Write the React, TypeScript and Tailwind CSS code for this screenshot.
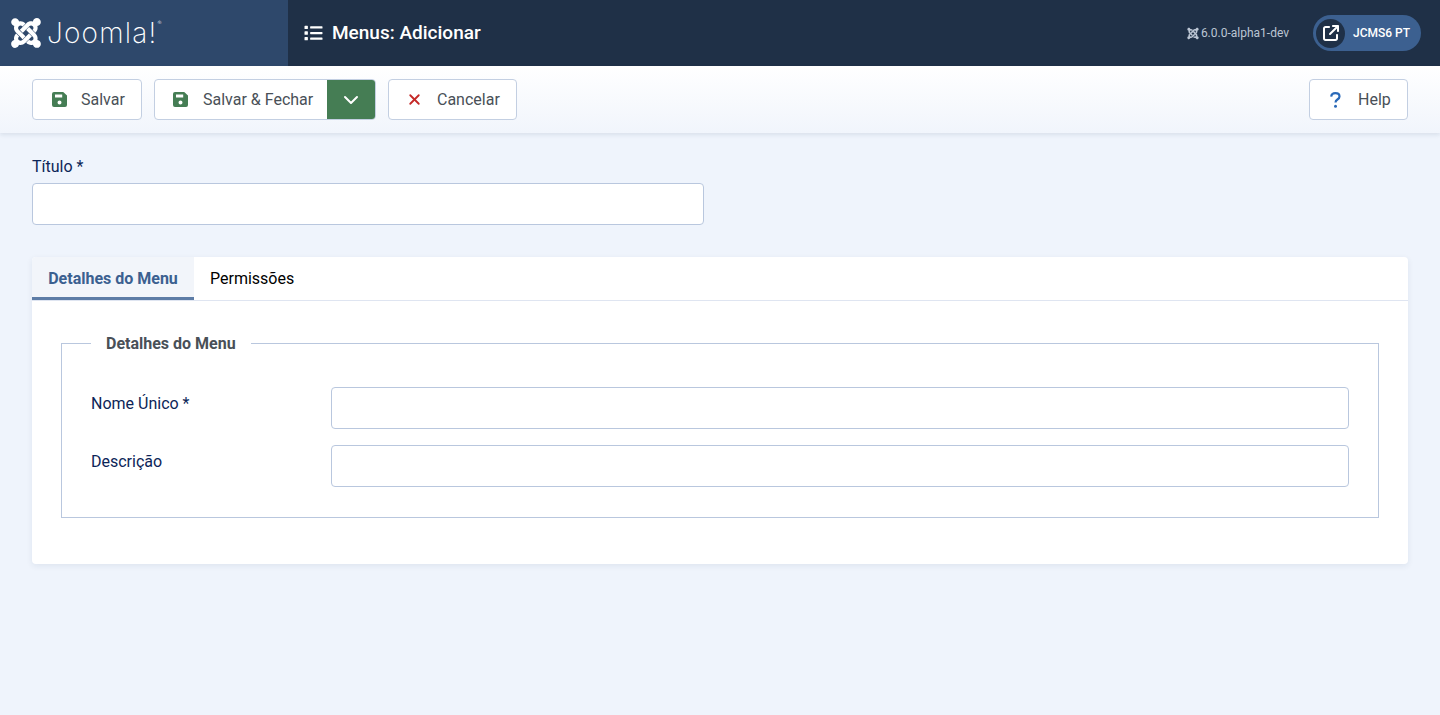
import { ReactNode } from "react";
import { ChevronDown, X } from "lucide-react";
import { FaJoomla, FaList } from "react-icons/fa";
import { FaArrowUpRightFromSquare } from "react-icons/fa6";

function SaveIcon({ className = "" }: { className?: string }) {
  return (
    <svg viewBox="0 0 15 15" className={`h-[15px] w-[15px] text-[#457d54] ${className}`}>
      <path
        fill="currentColor"
        fillRule="evenodd"
        d="M2 0h9.2L15 3.6V13a2 2 0 0 1-2 2H2a2 2 0 0 1-2-2V2a2 2 0 0 1 2-2ZM3 2.4v3.2h7.2V2.4H3Zm4.5 6a2 2 0 1 0 0 4 2 2 0 0 0 0-4Z"
      />
    </svg>
  );
}

function QuestionIcon({ className = "" }: { className?: string }) {
  return (
    <svg viewBox="0 0 11 16" fill="none" className={`h-4 w-[11px] text-[#2a69b8] ${className}`}>
      <path
        d="M1.2 4.6C1.400 2.300 3 1.100 5.400 1.100c2.400 0 4.100 1.300 4.100 3.300 0 1.500-.9 2.300-2.100 3.100C6.200 8.300 5.500 9 5.500 10.600"
        stroke="currentColor"
        strokeWidth="2.2"
      />
      <circle cx="5.500" cy="14.200" r="1.500" fill="currentColor" />
    </svg>
  );
}

function ToolbarButton({
  icon,
  label,
  className = "",
}: {
  icon: ReactNode;
  label: string;
  className?: string;
}) {
  return (
    <button
      className={`flex h-[41px] items-center rounded-[4px] border border-[#c3cfe2] bg-white text-base text-[#495057] ${className}`}
    >
      {icon}
      <span>{label}</span>
    </button>
  );
}

function TextInput({ className = "" }: { className?: string }) {
  return (
    <input
      type="text"
      className={`block h-[42px] rounded-[4px] border border-[#b9c7de] bg-white ${className}`}
    />
  );
}

function FormRow({ label, className = "" }: { label: string; className?: string }) {
  return (
    <div className={`flex ${className}`}>
      <label className="w-[240px] pt-[5px] text-base leading-6 text-[#0c2558]">
        {label}
      </label>
      <TextInput className="flex-1" />
    </div>
  );
}

export default function App() {
  return (
    <div className="flex min-h-[715px] flex-col bg-[#eff4fc] font-['Roboto',sans-serif]">
      {/*Header*/}
      <header className="flex h-[66px] items-center bg-[#1f3047] text-white">
        <div className="flex h-full w-[288px] items-center bg-[#2e486b] pl-[11px]">
          <FaJoomla className="h-[34px] w-[30px]" />
          <span className="relative ml-[6px] font-['Inter',sans-serif] text-[28px] leading-none font-extralight tracking-[1.2px]">
            Joomla!
            <span className="absolute top-[1px] -right-[4px] text-[6px] tracking-normal">®</span>
          </span>
        </div>
        <div className="flex flex-1 items-center pl-4">
          <FaList className="h-[18px] w-[19px]" />
          <h1 className="ml-[9px] text-[19px] font-medium">Menus: Adicionar</h1>
        </div>
        <div className="flex items-center text-xs text-[#bcc6d4]">
          <FaJoomla className="mr-[2px] h-[13px] w-[12px]" />
          6.0.0-alpha1-dev
        </div>
        <div className="mr-[19px] ml-[24px] flex h-9 w-[108px] items-center rounded-full bg-[#3c6090] pl-[3px]">
          <div className="flex h-[29px] w-[29px] items-center justify-center rounded-full bg-[#1f3047]">
            <FaArrowUpRightFromSquare className="h-[16px] w-[16px]" />
          </div>
          <span className="ml-2 text-xs font-medium">JCMS6 PT</span>
        </div>
      </header>

      {/*Toolbar*/}
      <div className="flex h-[67px] items-center gap-3 bg-gradient-to-b from-white to-[#f1f5fc] px-8 shadow-[0_2px_4px_rgba(30,55,90,0.1)]">
        <ToolbarButton
          className="w-[110px] pl-[19px]"
          icon={<SaveIcon className="mr-[14px]" />}
          label="Salvar"
        />
        <div className="flex h-[41px] w-[222px] rounded-[4px] border border-[#c3cfe2] bg-white text-base text-[#495057]">
          <button className="flex flex-1 items-center pl-[18px]">
            <SaveIcon className="mr-[15px]" />
            <span>Salvar &amp; Fechar</span>
          </button>
          <button className="flex w-[48px] items-center justify-center rounded-r-[3px] bg-[#457d54] text-white">
            <ChevronDown className="h-6 w-6" strokeWidth={2} />
          </button>
        </div>
        <ToolbarButton
          className="w-[129px] pl-[17px]"
          icon={<X className="mr-[14px] h-[17px] w-[17px] text-[#c52827]" strokeWidth={2.6} />}
          label="Cancelar"
        />
        <ToolbarButton
          className="ml-auto w-[99px] pl-[20px]"
          icon={<QuestionIcon className="mr-[17px]" />}
          label="Help"
        />
      </div>

      <main className="px-8 pt-[22px]">
        <label className="block text-base leading-6 text-[#0c2558]">Título *</label>
        <TextInput className="mt-[4px] w-[672px]" />

        {/*Tabs card*/}
        <div className="mt-8 h-[307px] rounded-[4px] bg-white shadow-[0_2px_6px_rgba(30,55,90,0.08)]">
          <div className="flex h-[44px] border-b border-[#dfe5f1]">
            <div className="h-[43px] w-[162px] rounded-tl-[4px] border-b-[3px] border-[#5d7ca6] bg-[#f2f5fa] pt-[10px] text-center text-base font-bold text-[#3b6090]">
              Detalhes do Menu
            </div>
            <div className="px-4 pt-[10px] text-base text-black">Permissões</div>
          </div>
          <fieldset className="mx-[29px] mt-[32px] h-[185px] rounded-none border border-[#b9c7de] px-[29px] pt-[34px]">
            <legend className="translate-y-px px-[15px] text-base leading-5 font-bold text-[#495057]">
              Detalhes do Menu
            </legend>
            <FormRow label="Nome Único *" />
            <FormRow className="mt-4" label="Descrição" />
          </fieldset>
        </div>
      </main>
    </div>
  );
}
